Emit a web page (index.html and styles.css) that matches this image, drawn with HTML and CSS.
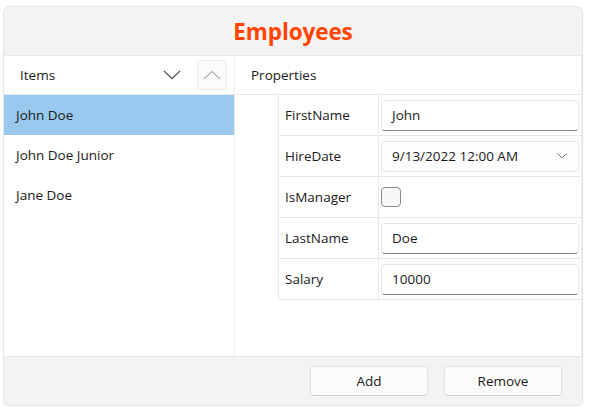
FILE: index.html
```html
<!DOCTYPE html>
<html>
<head>
<meta charset="utf-8">
<link rel="stylesheet" href="styles.css">
</head>
<body>
<div class="window">
  <div class="title">Employees</div>
  <div class="content">
    <div class="items">
      <div class="col-head">
        <span class="head-label">Items</span>
        <svg class="chev-down" width="18" height="10" viewBox="0 0 18 10"><path d="M1 1 L9 8.5 L17 1" fill="none" stroke="#5a5a5a" stroke-width="1.3"/></svg>
        <div class="up-btn"><svg width="18" height="10" viewBox="0 0 18 10"><path d="M1 9 L9 1.5 L17 9" fill="none" stroke="#b0b0b0" stroke-width="1.2"/></svg></div>
      </div>
      <div class="list">
        <div class="list-item selected">John Doe</div>
        <div class="list-item">John Doe Junior</div>
        <div class="list-item">Jane Doe</div>
      </div>
    </div>
    <div class="props">
      <div class="col-head"><span class="head-label props-label">Properties</span></div>
      <div class="grid">
        <div class="pname">FirstName</div>
        <div class="pval"><div class="textbox">John</div></div>
        <div class="pname">HireDate</div>
        <div class="pval"><div class="combo"><span>9/13/2022 12:00 AM</span><svg width="10" height="6" viewBox="0 0 10 6"><path d="M0.5 0.5 L5 5 L9.5 0.5" fill="none" stroke="#777" stroke-width="1"/></svg></div></div>
        <div class="pname">IsManager</div>
        <div class="pval"><div class="checkbox"></div></div>
        <div class="pname">LastName</div>
        <div class="pval"><div class="textbox">Doe</div></div>
        <div class="pname">Salary</div>
        <div class="pval"><div class="textbox">10000</div></div>
      </div>
    </div>
  </div>
  <div class="footer">
    <div class="btn">Add</div>
    <div class="btn">Remove</div>
  </div>
</div>
</body>
</html>
```

FILE: styles.css
```css
html, body {
  margin: 0;
  padding: 0;
  background: #ffffff;
}
body {
  font-family: "Open Sans", "Noto Sans", sans-serif;
  font-size: 13.5px;
  color: #1a1a1a;
}
.window {
  margin: 6px 0 0 3px;
  width: 578px;
  height: 398px;
  background: #f3f3f3;
  border: 1px solid #e6e6e6;
  border-radius: 7px;
  display: flex;
  flex-direction: column;
  overflow: hidden;
  box-shadow: 0 1px 2px rgba(0,0,0,0.06);
}
.title {
  height: 48px;
  padding-top: 1px;
  box-sizing: border-box;
  display: flex;
  align-items: center;
  justify-content: center;
  color: #ff4500;
  font-weight: 700;
  font-size: 22.5px;
  letter-spacing: -0.1px;
}
.content {
  flex: 1;
  background: #fff;
  border-top: 1px solid #e8e8e8;
  border-bottom: 1px solid #e8e8e8;
  border-right: 1px solid #ececec;
  display: grid;
  grid-template-columns: 231px 1fr;
}
.items {
  border-right: 1px solid #ececec;
  display: flex;
  flex-direction: column;
}
.col-head {
  height: 38px;
  border-bottom: 1px solid #e8e8e8;
  display: flex;
  align-items: center;
}
.head-label {
  padding-left: 16px;
  flex: 1;
}
.props-label {
  padding-left: 16px;
}
.chev-down {
  margin-right: 16px;
}
.up-btn {
  width: 30px;
  height: 30px;
  box-sizing: border-box;
  border: 1px solid #e9e9e9;
  border-radius: 4px;
  background: #fbfbfb;
  display: flex;
  align-items: center;
  justify-content: center;
  margin-right: 7px;
}
.list-item {
  height: 40px;
  display: flex;
  align-items: center;
  padding-left: 12px;
  padding-bottom: 1px;
  box-sizing: border-box;
}
.list-item.selected {
  background: #99c9ef;
}
.grid {
  margin-left: 43px;
  display: grid;
  grid-template-columns: 100px 1fr;
  border-left: 1px solid #e8e8e8;
}
.pname, .pval {
  height: 40px;
  border-bottom: 1px solid #e8e8e8;
  display: flex;
  align-items: center;
}
.pname {
  padding-left: 6px;
  border-right: 1px solid #e8e8e8;
}
.pval {
  padding: 0 2px 0 2px;
}
.textbox, .combo {
  flex: 1;
  height: 31px;
  box-sizing: border-box;
  border: 1px solid #e6e6e6;
  border-bottom: 1px solid #8a8a8a;
  border-radius: 4px;
  background: #fff;
  display: flex;
  align-items: center;
  padding-left: 10px;
}
.combo {
  border-bottom: 1px solid #e0e0e0;
  justify-content: space-between;
  padding-right: 11px;
  background: #fdfdfd;
}
.checkbox {
  width: 18px;
  height: 18px;
  border: 1px solid #8a8a8a;
  border-radius: 4px;
  background: #f7f7f7;
  margin-left: 0;
}
.footer {
  height: 48px;
  display: flex;
  justify-content: flex-end;
  align-items: center;
  gap: 16px;
  padding-right: 20px;
}
.btn {
  width: 116px;
  height: 28px;
  border: 1px solid #e3e3e3;
  border-bottom-color: #cfcfcf;
  border-radius: 4px;
  background: #fbfbfb;
  display: flex;
  align-items: center;
  justify-content: center;
}
```
